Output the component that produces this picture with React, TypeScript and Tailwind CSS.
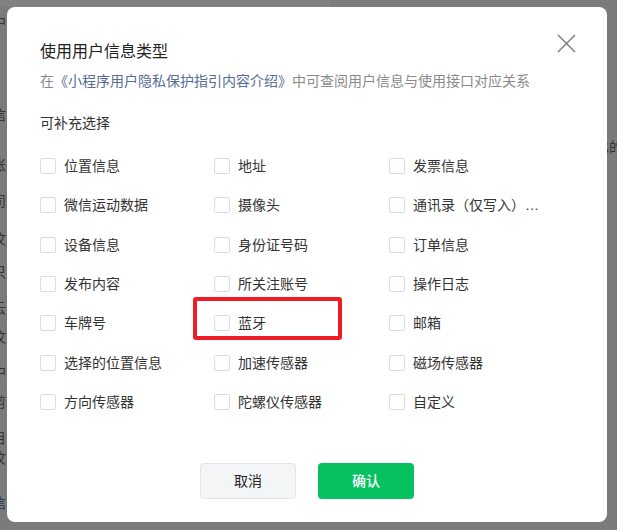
const font = { fontFamily: '"Liberation Sans", "Noto Sans CJK SC", sans-serif' };

const options = [
  "位置信息", "地址", "发票信息",
  "微信运动数据", "摄像头", "通讯录（仅写入）权限",
  "设备信息", "身份证号码", "订单信息",
  "发布内容", "所关注账号", "操作日志",
  "车牌号", "蓝牙", "邮箱",
  "选择的位置信息", "加速传感器", "磁场传感器",
  "方向传感器", "陀螺仪传感器", "自定义",
];

// fragments of the page behind the mask, cut by the window's left edge
const leftBits = [
  { t: "中", y: 14 }, { t: "信", y: 107 }, { t: "账", y: 157 }, { t: "司", y: 193 },
  { t: "汶", y: 231 }, { t: "只", y: 264 }, { t: "云", y: 300 }, { t: "汶", y: 329 },
  { t: "中", y: 364 }, { t: "剪", y: 394 }, { t: "目", y: 430 }, { t: "汶", y: 450 },
];

export default function App() {
  return (
    <div className="relative w-[617px] h-[530px] overflow-hidden bg-[#7b7b7b] pl-[7px] pt-[7px]" style={font}>
      <div className="absolute left-0 top-0 w-[330px] h-[7px] bg-[#818181]" />
      {leftBits.map((b, i) => (
        <span
          key={i}
          className="absolute left-[-8px] text-[14px] leading-4 text-[#333]"
          style={{ top: b.y }}
        >
          {b.t}
        </span>
      ))}
      <span className="absolute left-[-8px] top-[495px] text-[14px] leading-4 text-[#2d3a5c]">信</span>
      <span className="absolute left-[595px] top-[139px] whitespace-nowrap text-[14px] leading-4 text-[#333]">比的</span>

      <div className="relative flex flex-col w-[600px] h-[515px] rounded-lg bg-white px-[33px] pt-[33px] pb-[23px]">
        <button className="absolute right-[31px] top-[27px] w-[19px] h-[19px] text-[#7a7a7a]">
          <svg viewBox="0 0 19 19" className="w-[19px] h-[19px]" fill="none" stroke="currentColor" strokeWidth={1.4}>
            <path d="M1 1l17 17M18 1L1 18" />
          </svg>
        </button>

        <h2 className="text-[16px] leading-6 text-[#222]">使用用户信息类型</h2>
        <p className="mt-[7px] text-[14px] leading-5 text-[#8a8a8a]">
          在<span className="text-[#576b95]">《小程序用户隐私保护指引内容介绍》</span>中可查阅用户信息与使用接口对应关系
        </p>
        <p className="mt-[22px] text-[14px] leading-5 text-[#333]">可补充选择</p>

        <div className="mt-[21px] grid grid-cols-[174px_175px_1fr] gap-y-[15.33px]">
          {options.map((o) => (
            <label key={o} className="relative flex items-center gap-2 h-6">
              {o === "蓝牙" && (
                <span className="absolute left-[-21px] top-[-14px] w-[149px] h-[43px] border-4 border-[#ee1c25] rounded-[3px]" />
              )}
              <span className="w-4 h-4 shrink-0 rounded-[2px] border border-[#dcdcdc] bg-white" />
              <span className="max-w-[128px] truncate text-[14px] leading-5 text-[#333]">{o}</span>
            </label>
          ))}
        </div>

        <div className="flex-1" />

        <div className="flex justify-center gap-[22px]">
          <button className="w-24 h-9 rounded border border-[#e3e4e8] bg-[#f4f5f7] text-[14px] text-[#222]">取消</button>
          <button className="w-24 h-9 rounded bg-[#07c160] text-[14px] font-medium text-white">确认</button>
        </div>
      </div>
    </div>
  );
}
